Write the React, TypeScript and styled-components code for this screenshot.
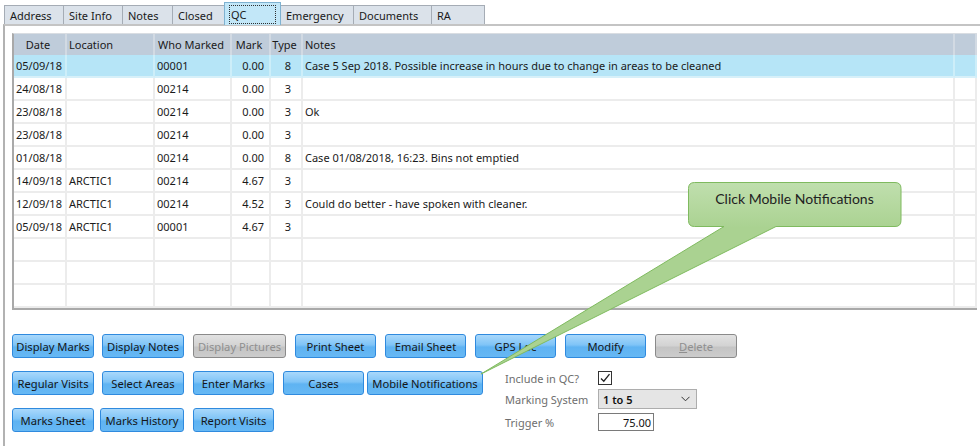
import React from "react";
import styled, { createGlobalStyle } from "styled-components";

const Global = createGlobalStyle`
  html, body { margin: 0; padding: 0; background: #ffffff; }
  body { font-family: "Noto Sans", "Open Sans", sans-serif; }
  * { box-sizing: border-box; }
`;

const Frame = styled.div`
  position: relative;
  width: 980px;
  height: 446px;
  overflow: hidden;
  background: #ffffff;
  font-family: "Noto Sans", "Open Sans", sans-serif;
  font-size: 11px;
  color: #1a1a1a;
`;

/* ---------- tab strip ---------- */

const TabStrip = styled.div`
  display: flex;
  align-items: flex-end;
  height: 24px;
  padding-left: 5px;
`;

const Tab = styled.div<{ $w: number; $active?: boolean }>`
  position: relative;
  z-index: ${(p) => (p.$active ? 2 : 1)};
  width: ${(p) => p.$w}px;
  height: ${(p) => (p.$active ? 23 : 19)}px;
  margin-bottom: ${(p) => (p.$active ? -1 : 0)}px;
  margin-left: -1px;
  padding: 0 5px;
  display: flex;
  align-items: center;
  border: 1px solid ${(p) => (p.$active ? "#7fb2d1" : "#a5acb5")};
  border-bottom: none;
  background: ${(p) => (p.$active ? "#c2e7f8" : "#dbe2ea")};
  font-size: 11px;
  color: #1a1a1a;
  white-space: nowrap;
`;

const FocusRing = styled.span`
  display: flex;
  align-items: center;
  width: 100%;
  height: 17px;
  padding-left: 1px;
  outline: 1px dotted #303030;
  outline-offset: 0;
`;

/* ---------- tab page ---------- */

const TabPage = styled.div`
  margin-left: 3px;
  height: 422px;
  border-left: 2px solid #b2b2b2;
  border-top: 2px solid #c4c4c4;
  padding: 7px 0 0 7px;
`;

/* ---------- grid ---------- */

const Grid = styled.div`
  width: 965px;
  border-left: 2px solid #a9a9a9;
  border-bottom: 2px solid #a9a9a9;
  border-top: 1px solid #d9dde2;
`;

const Row = styled.div<{ $selected?: boolean; $header?: boolean }>`
  display: grid;
  grid-template-columns: 53px 88px 77px 39px 32px 652px 1fr;
  height: ${(p) => (p.$header ? 21 : 23)}px;
  background: ${(p) =>
    p.$header ? "#bfccda" : p.$selected ? "#b6e5f7" : "#ffffff"};
`;

const Cell = styled.div<{
  $align?: "left" | "right" | "center";
  $pr?: number;
  $header?: boolean;
  $selected?: boolean;
}>`
  display: flex;
  align-items: center;
  justify-content: ${(p) =>
    p.$align === "right"
      ? "flex-end"
      : p.$align === "center"
      ? "center"
      : "flex-start"};
  padding: 0 ${(p) => p.$pr ?? 3}px 0 ${(p) => (p.$align === "center" ? 0 : 2)}px;
  border-right: 2px solid
    ${(p) => (p.$header ? "#d2dae3" : p.$selected ? "#cdeef9" : "#ececec")};
  border-bottom: ${(p) =>
    p.$header ? "none" : `2px solid ${p.$selected ? "#d7f0f9" : "#ececec"}`};
  white-space: nowrap;
  overflow: hidden;
  font-size: 11px;
  color: #1a1a1a;
`;

/* ---------- buttons ---------- */

const Controls = styled.div`
  display: flex;
  flex-direction: column;
  gap: 13px;
  margin-top: 24px;
`;

const ButtonRow = styled.div<{ $gap?: number }>`
  display: flex;
  gap: ${(p) => p.$gap ?? 9}px;
`;

const Lower = styled.div`
  display: flex;
  align-items: flex-start;
`;

const ButtonStack = styled.div`
  display: flex;
  flex-direction: column;
  gap: 13px;
  width: 471px;
`;

const Button = styled.button<{ $w: number; $ml?: number }>`
  width: ${(p) => p.$w}px;
  height: 24px;
  margin-left: ${(p) => p.$ml ?? 0}px;
  padding: 0;
  border: 1px solid #2f8ade;
  border-radius: 3px;
  background: linear-gradient(#a9d8fb 0%, #7fc4f7 45%, #5fb3f2 55%, #66b8f4 100%);
  font-family: "Noto Sans", "Open Sans", sans-serif;
  font-size: 11.2px;
  color: #161616;
  white-space: nowrap;
  cursor: pointer;

  &:disabled {
    border-color: #8a8a8a;
    background: linear-gradient(#e2e2e2 0%, #d2d2d2 50%, #c4c4c4 55%, #cccccc 100%);
    color: #8f8f8f;
    cursor: default;
  }
`;

const Accel = styled.span`
  text-decoration: underline;
`;

/* ---------- QC settings ---------- */

const Settings = styled.div`
  display: grid;
  grid-template-columns: 93px auto;
  grid-template-rows: 14px 20px 18px;
  row-gap: 4px;
  margin-left: 22px;
  align-items: center;
`;

const Label = styled.span`
  font-size: 11px;
  color: #6e6e6e;
  white-space: nowrap;
`;

const CheckBox = styled.span`
  display: flex;
  align-items: center;
  justify-content: center;
  width: 14px;
  height: 14px;
  border: 1px solid #333333;
  background: #ffffff;
`;

const Select = styled.div`
  display: flex;
  align-items: center;
  justify-content: space-between;
  width: 99px;
  height: 20px;
  padding: 0 6px 0 4px;
  border: 1px solid #adadad;
  background: #e5e5e5;
  font-size: 11px;
  font-weight: 600;
  color: #111111;
`;

const NumberBox = styled.div`
  display: flex;
  align-items: center;
  justify-content: flex-end;
  width: 56px;
  height: 18px;
  padding-right: 2px;
  border: 1px solid #7a7a7a;
  background: #ffffff;
  font-size: 11px;
  color: #111111;
`;

/* ---------- callout ---------- */

const CalloutShape = styled.svg`
  position: absolute;
  left: 0;
  top: 0;
  width: 980px;
  height: 446px;
  pointer-events: none;
  z-index: 5;
`;

const CalloutText = styled.div`
  position: absolute;
  left: 688px;
  top: 182px;
  width: 213px;
  padding-top: 8px;
  text-align: center;
  font-family: "Lato", "Noto Sans", sans-serif;
  font-size: 14px;
  color: #222222;
  z-index: 6;
`;

type Entry = {
  date: string;
  location: string;
  who: string;
  mark: string;
  type: string;
  notes: string;
};

const entries: Entry[] = [
  {
    date: "05/09/18",
    location: "",
    who: "00001",
    mark: "0.00",
    type: "8",
    notes:
      "Case 5 Sep 2018. Possible increase in hours due to change in areas to be cleaned",
  },
  { date: "24/08/18", location: "", who: "00214", mark: "0.00", type: "3", notes: "" },
  { date: "23/08/18", location: "", who: "00214", mark: "0.00", type: "3", notes: "Ok" },
  { date: "23/08/18", location: "", who: "00214", mark: "0.00", type: "3", notes: "" },
  {
    date: "01/08/18",
    location: "",
    who: "00214",
    mark: "0.00",
    type: "8",
    notes: "Case 01/08/2018, 16:23. Bins not emptied",
  },
  { date: "14/09/18", location: "ARCTIC1", who: "00214", mark: "4.67", type: "3", notes: "" },
  {
    date: "12/09/18",
    location: "ARCTIC1",
    who: "00214",
    mark: "4.52",
    type: "3",
    notes: "Could do better - have spoken with cleaner.",
  },
  { date: "05/09/18", location: "ARCTIC1", who: "00001", mark: "4.67", type: "3", notes: "" },
];

const blankRows = 3;

const tabs = [
  { label: "Address", w: 60 },
  { label: "Site Info", w: 60 },
  { label: "Notes", w: 51 },
  { label: "Closed", w: 53 },
  { label: "QC", w: 57, active: true },
  { label: "Emergency", w: 74 },
  { label: "Documents", w: 79 },
  { label: "RA", w: 54 },
];

const calloutPath =
  "M694.5,182.5 H895 Q901,182.5 901,188.5 V220.5 Q901,226.5 895,226.5 H776 L481,374 L724,226.5 H694.5 Q688.5,226.5 688.5,220.5 V188.5 Q688.5,182.5 694.5,182.5 Z";

export default function App() {
  return (
    <Frame>
      <Global />
      <TabStrip>
        {tabs.map((t) => (
          <Tab key={t.label} $w={t.w} $active={t.active}>
            {t.active ? <FocusRing>{t.label}</FocusRing> : t.label}
          </Tab>
        ))}
      </TabStrip>

      <TabPage>
        <Grid>
          <Row $header>
            <Cell $header $align="center">Date</Cell>
            <Cell $header>Location</Cell>
            <Cell $header $align="center">Who Marked</Cell>
            <Cell $header $align="center">Mark</Cell>
            <Cell $header $align="center">Type</Cell>
            <Cell $header>Notes</Cell>
            <Cell $header />
          </Row>
          {entries.map((e, i) => {
            const sel = i === 0;
            return (
              <Row key={i} $selected={sel}>
                <Cell $selected={sel} $pr={0}>{e.date}</Cell>
                <Cell $selected={sel}>{e.location}</Cell>
                <Cell $selected={sel}>{e.who}</Cell>
                <Cell $selected={sel} $align="right" $pr={5}>{e.mark}</Cell>
                <Cell $selected={sel} $align="right" $pr={10}>{e.type}</Cell>
                <Cell $selected={sel}>{e.notes}</Cell>
                <Cell $selected={sel} />
              </Row>
            );
          })}
          {Array.from({ length: blankRows }).map((_, i) => (
            <Row key={`blank-${i}`}>
              <Cell />
              <Cell />
              <Cell />
              <Cell />
              <Cell />
              <Cell />
              <Cell />
            </Row>
          ))}
        </Grid>

        <Controls>
          <ButtonRow>
            <Button $w={82}>Display Marks</Button>
            <Button $w={82} $ml={-1}>Display Notes</Button>
            <Button $w={93} disabled>Display Pictures</Button>
            <Button $w={81}>Print Sheet</Button>
            <Button $w={81}>Email Sheet</Button>
            <Button $w={81}>GPS Loc</Button>
            <Button $w={81}>Modify</Button>
            <Button $w={82} disabled>
              <Accel>D</Accel>elete
            </Button>
          </ButtonRow>

          <Lower>
            <ButtonStack>
              <ButtonRow>
                <Button $w={82}>Regular Visits</Button>
                <Button $w={82} $ml={-1}>Select Areas</Button>
                <Button $w={81}>Enter Marks</Button>
                <Button $w={81}>Cases</Button>
                <Button $w={116} $ml={-6}>Mobile Notifications</Button>
              </ButtonRow>
              <ButtonRow>
                <Button $w={82}>Marks Sheet</Button>
                <Button $w={84} $ml={-3}>Marks History</Button>
                <Button $w={81}>Report Visits</Button>
              </ButtonRow>
            </ButtonStack>

            <Settings>
              <Label>Include in QC?</Label>
              <CheckBox>
                <svg width="12" height="12" viewBox="0 0 12 12">
                  <polyline
                    points="2,6.5 4.8,9.2 10.5,2.2"
                    fill="none"
                    stroke="#222"
                    strokeWidth="1.3"
                  />
                </svg>
              </CheckBox>
              <Label>Marking System</Label>
              <Select>
                <span>1 to 5</span>
                <svg width="9" height="6" viewBox="0 0 9 6">
                  <polyline
                    points="0.5,0.8 4.5,4.8 8.5,0.8"
                    fill="none"
                    stroke="#333"
                    strokeWidth="1"
                  />
                </svg>
              </Select>
              <Label>Trigger %</Label>
              <NumberBox>75.00</NumberBox>
            </Settings>
          </Lower>
        </Controls>
      </TabPage>

      <CalloutShape viewBox="0 0 980 446">
        <defs>
          <linearGradient id="calloutFill" gradientUnits="userSpaceOnUse" x1="0" y1="182" x2="0" y2="228">
            <stop offset="0" stopColor="#c0dfae" />
            <stop offset="1" stopColor="#aad291" />
          </linearGradient>
        </defs>
        <path d={calloutPath} fill="url(#calloutFill)" stroke="#7fba5f" strokeWidth="1" />
      </CalloutShape>
      <CalloutText>Click Mobile Notifications</CalloutText>
    </Frame>
  );
}
